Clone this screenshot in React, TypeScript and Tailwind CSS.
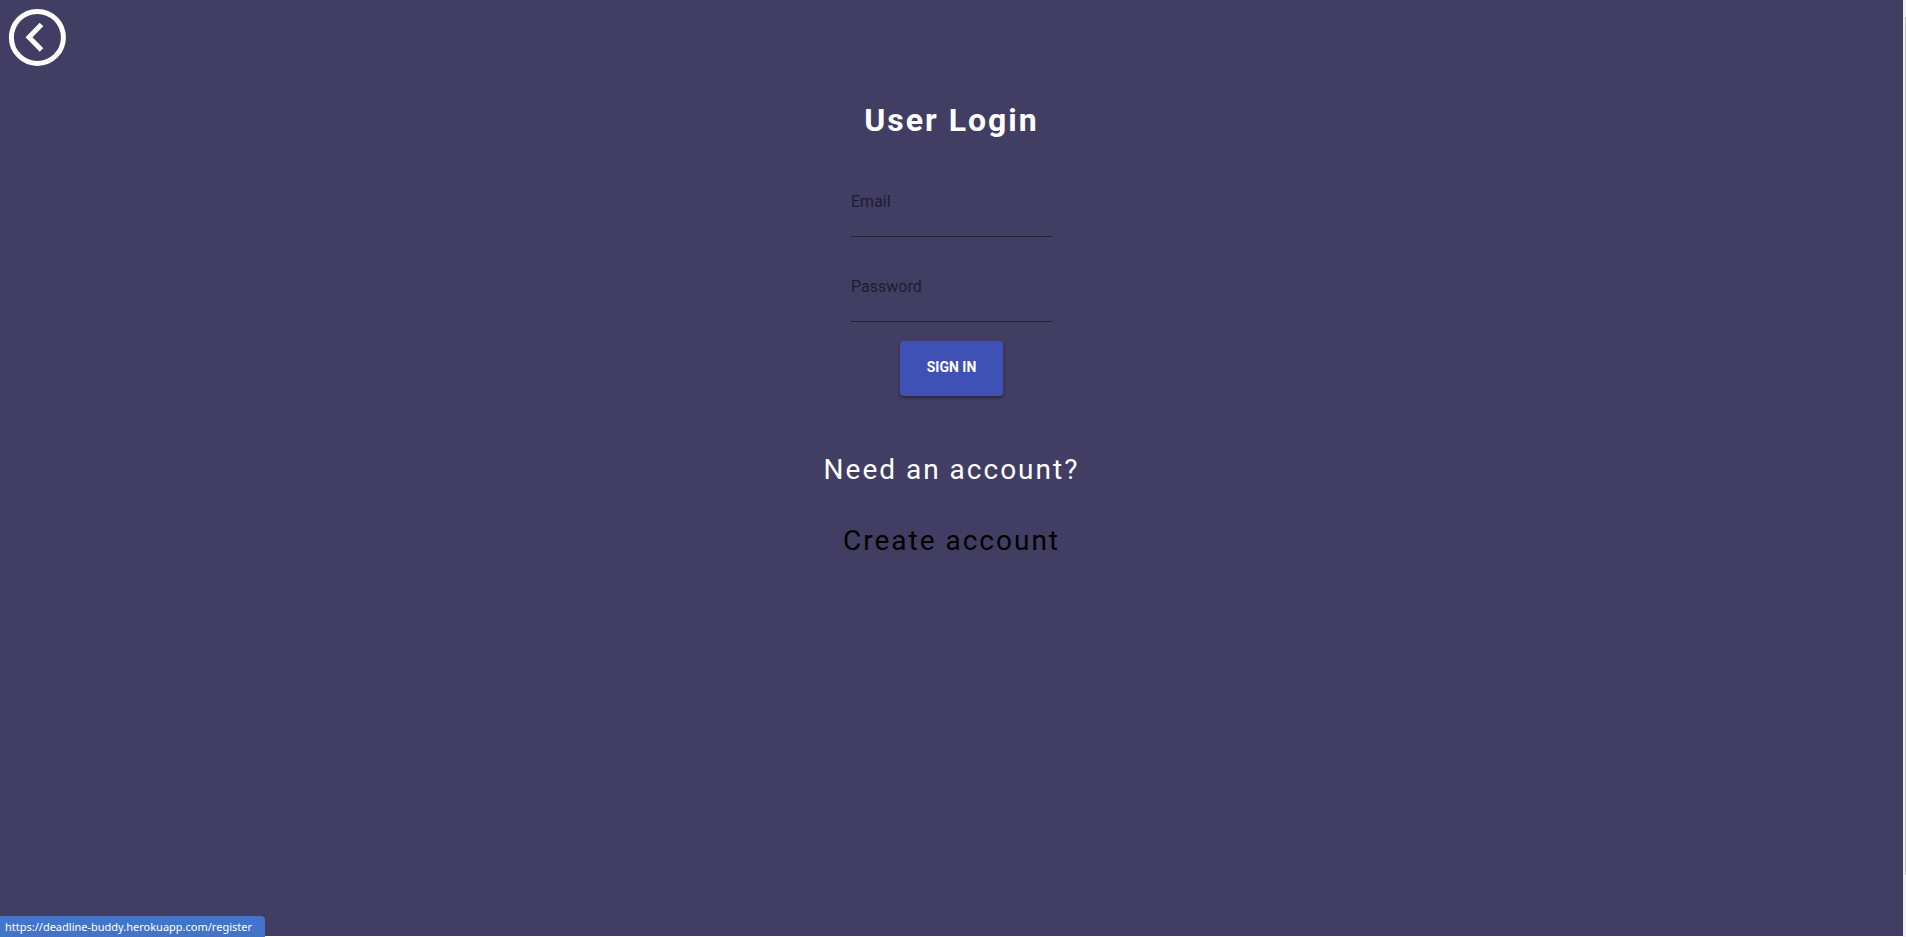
import { useState } from "react";

function BackIcon() {
  return (
    <svg viewBox="0 0 58 58" className="h-[58px] w-[58px]" fill="none" stroke="#fff" aria-hidden="true">
      <circle cx="29.4" cy="29.4" r="26" strokeWidth="5" />
      <path d="M33.5 16.5 L21 29.3 L33.5 42" strokeWidth="5" />
    </svg>
  );
}

interface FieldProps {
  id: string;
  label: string;
  type: string;
  value: string;
  onChange: (value: string) => void;
}

function Field({ id, label, type, value, onChange }: FieldProps) {
  return (
    <div className="flex w-[201px] flex-col">
      <label htmlFor={id} className="h-6 text-base leading-6 text-black/55">
        {label}
      </label>
      <input
        id={id}
        type={type}
        value={value}
        onChange={(e) => onChange(e.target.value)}
        className="h-[23px] w-full border-b border-black/45 bg-transparent text-base outline-none"
      />
    </div>
  );
}

export default function App() {
  const [email, setEmail] = useState("");
  const [password, setPassword] = useState("");

  return (
    <div className="flex min-h-screen bg-white font-['Roboto',sans-serif]">
      <div className="mb-px flex-1 bg-[#413d63]">
        <header className="flex h-[76px] pt-2 pl-2">
          <button type="button" aria-label="Back" className="h-[58px]">
            <BackIcon />
          </button>
        </header>

        <main className="flex flex-col items-center">
          <h1 className="mt-6 text-[32px] leading-10 font-bold tracking-[2px] text-white">User Login</h1>

          <form onSubmit={(e) => e.preventDefault()} className="mt-[50px] flex flex-col items-center">
            <div className="flex flex-col gap-[38px]">
              <Field id="email" label="Email" type="email" value={email} onChange={setEmail} />
              <Field id="password" label="Password" type="password" value={password} onChange={setPassword} />
            </div>
            <button
              type="submit"
              className="mt-[19px] h-[55px] w-[103px] rounded bg-[#3f51b5] pb-[3px] text-sm font-bold text-white shadow-[0_2px_3px_rgba(0,0,0,0.35)]"
            >
              SIGN IN
            </button>
          </form>

          <p className="mt-[54px] text-[28px] leading-10 tracking-[2px] text-white">Need an account?</p>
          <a href="#register" className="mt-[31px] text-[28px] leading-10 tracking-[2px] text-black">
            Create account
          </a>
        </main>
      </div>

      {/* scrollbar */}
      <div className="w-[3px] bg-[#f1f1f1] pt-[17px] pl-[2px]">
        <div className="h-[858px] bg-[#c1c1c1]" />
      </div>

      {/* browser link status */}
      <div className="fixed bottom-0 left-0 h-[21px] w-[265px] rounded-tr bg-[#4274ca] px-[5px] font-['Noto_Sans',sans-serif] text-[11px] leading-[21px] text-white">
        https://deadline-buddy.herokuapp.com/register
      </div>
    </div>
  );
}
